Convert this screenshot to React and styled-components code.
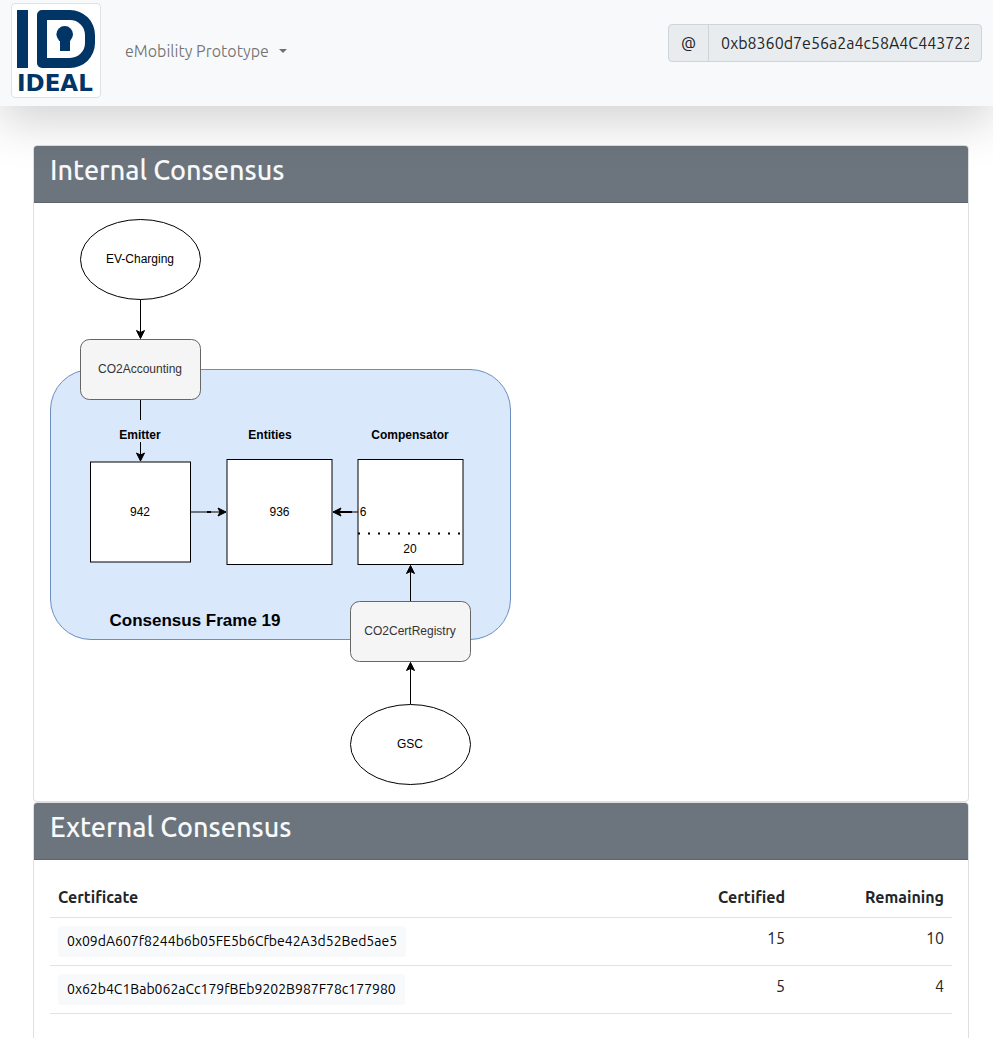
import React from "react";
import styled, { createGlobalStyle } from "styled-components";

const GlobalStyle = createGlobalStyle`
  *, *::before, *::after { box-sizing: border-box; }
  body {
    margin: 0;
    background: #fff;
    color: #212529;
    font-family: Ubuntu, "Noto Sans", sans-serif;
    font-size: 16px;
    line-height: 24px;
  }
`;

const Navbar = styled.header`
  position: relative;
  z-index: 1;
  display: flex;
  align-items: center;
  padding: 3px 11px 8px;
  background: #f8f9fb;
  box-shadow: 0 16px 48px rgba(0, 0, 0, 0.175);
`;

const Brand = styled.a`
  display: flex;
  flex-direction: column;
  flex: none;
  width: 90px;
  height: 95px;
  padding: 6px 5px 0;
  border: 1px solid #dee2e6;
  border-radius: 4px;
  background: #fff;
  color: #003566;
  text-decoration: none;
`;

const Mark = styled.span`
  display: flex;
  gap: 9px;
  height: 58px;
`;

const MarkBar = styled.span`
  width: 11px;
  background: currentColor;
`;

const MarkBowl = styled.span`
  width: 58px;
  border: 10px solid currentColor;
  border-radius: 5px 25px 25px 5px;
`;

const Keyhole = styled.svg`
  display: block;
  width: 38px;
  height: 38px;
`;

const BrandName = styled.span`
  font-family: "DejaVu Sans", sans-serif;
  font-size: 23px;
  font-weight: 700;
  line-height: 30px;
`;

const NavToggle = styled.button`
  display: flex;
  align-items: center;
  gap: 10px;
  margin-left: 16px;
  padding: 8px;
  border: 0;
  background: none;
  color: rgba(0, 0, 0, 0.55);
  font: inherit;
`;

const Caret = styled.span`
  border-top: 4px solid currentColor;
  border-left: 4px solid transparent;
  border-right: 4px solid transparent;
`;

const AddressGroup = styled.div`
  display: flex;
  width: 314px;
  height: 38px;
  margin: 0 0 15px auto;
  border: 1px solid #ced4da;
  border-radius: 4px;
  background: #e9ecef;
`;

const AddressLabel = styled.label`
  padding: 6px 12px;
  border-right: 1px solid #ced4da;
`;

const AddressInput = styled.input`
  flex: 1;
  min-width: 0;
  padding: 6px 12px;
  border: 0;
  background: transparent;
  color: inherit;
  font: inherit;
`;

const Main = styled.main`
  padding: 39px 24px 16px 33px;
`;

const Card = styled.section`
  border: 1px solid #dfdfdf;
  border-radius: 4px;
  background: #fff;
`;

const CardHeader = styled.div`
  padding: 8px 16px 15px;
  border-bottom: 1px solid #5f676e;
  border-radius: 3px 3px 0 0;
  background: #6c757d;
`;

const CardTitle = styled.h3`
  margin: 0;
  color: #f8f9fa;
  font-size: 27px;
  font-weight: 500;
  line-height: 33px;
`;

const CardBody = styled.div`
  padding: 16px;
`;

const Diagram = styled.svg`
  display: block;
  width: 461px;
  max-width: 100%;
  height: auto;
  font-family: "Liberation Sans", Arial, sans-serif;
  font-size: 12px;
  text-anchor: middle;
`;

const Label = styled.text`
  fill: ${(p) => p.$color || "#000"};
  font-weight: ${(p) => (p.$bold ? 700 : 400)};
  font-size: ${(p) => (p.$large ? 17 : 12)}px;
`;

const Table = styled.table`
  width: 100%;
  margin-bottom: 16px;
  border-collapse: separate;
  border-spacing: 0;
`;

const Cell = styled.td`
  width: ${(p) => (p.$numeric ? "159px" : "auto")};
  padding: 8px;
  border-bottom: 1px solid #dee2e6;
  text-align: ${(p) => (p.$numeric ? "right" : "left")};
  vertical-align: top;
`;

const HeadCell = styled(Cell)`
  padding-top: 9px;
  font-weight: 700;
`;

const CertificateButton = styled.button`
  display: block;
  padding: 4px 8px;
  border: 1px solid #f8f9fb;
  border-radius: 3px;
  background: #f8f9fb;
  color: #000;
  font: inherit;
  font-size: 14px;
  line-height: 21px;
`;

const heads = {
  down: "l-4 -8 l4 2 l4 -2 z",
  up: "l-4 8 l4 -2 l4 2 z",
  right: "l-8 -4 l2 4 l-2 4 z",
  left: "l8 -4 l-2 4 l2 4 z",
};

function Arrow({ from, to, dir }) {
  return (
    <g stroke="#000">
      <path d={`M${from} L${to}`} fill="none" />
      <path d={`M${to} ${heads[dir]}`} />
    </g>
  );
}

function ConsensusDiagram() {
  return (
    <Diagram viewBox="0 0 461 566" role="img" aria-label="Internal consensus flow">
      <rect x="0.5" y="150.5" width="460" height="270" rx="40.5" fill="#dae8fc" stroke="#6c8ebf" />
      <ellipse cx="90.5" cy="40.5" rx="60" ry="40" fill="#fff" stroke="#000" />
      <Label x="90" y="44">EV-Charging</Label>
      <Arrow from="90.5 80.5" to="90.5 119.5" dir="down" />
      <rect x="30.5" y="120.5" width="120" height="60" rx="9" fill="#f5f5f5" stroke="#666" />
      <Label x="90" y="154" $color="#333">CO2Accounting</Label>
      <path d="M90.5 181V201" stroke="#000" />
      <Label x="90" y="220" $bold>Emitter</Label>
      <Label x="220" y="220" $bold>Entities</Label>
      <Label x="360" y="220" $bold>Compensator</Label>
      <rect x="40.5" y="243" width="100" height="100" fill="#fff" stroke="#000" />
      <Label x="90" y="297">942</Label>
      <Arrow from="90.5 223" to="90.5 242" dir="down" />
      <rect x="177" y="240.5" width="105" height="105" fill="#fff" stroke="#000" />
      <Label x="229.5" y="297">936</Label>
      <Arrow from="141 293" to="176 293" dir="right" />
      <path d="M157 293H161" stroke="#000" strokeWidth="2" />
      <rect x="308" y="240.5" width="105" height="105" fill="#fff" stroke="#000" />
      <Arrow from="308 293" to="283 293" dir="left" />
      <path d="M288 293H302" stroke="#000" strokeWidth="2" />
      <Label x="313" y="297">6</Label>
      <path d="M308 314.5H413" stroke="#000" strokeWidth="2" strokeDasharray="2 8" />
      <Label x="360" y="334">20</Label>
      <Arrow from="360.5 382" to="360.5 346.5" dir="up" />
      <Label x="145" y="407" $bold $large>Consensus Frame 19</Label>
      <rect x="300.5" y="382.5" width="120" height="60" rx="9" fill="#f5f5f5" stroke="#666" />
      <Label x="360" y="416" $color="#333">CO2CertRegistry</Label>
      <Arrow from="360.5 485" to="360.5 443.5" dir="up" />
      <ellipse cx="360.5" cy="525.5" rx="60" ry="40" fill="#fff" stroke="#000" />
      <Label x="360" y="529">GSC</Label>
    </Diagram>
  );
}

const certificates = [
  { address: "0x09dA607f8244b6b05FE5b6Cfbe42A3d52Bed5ae5", certified: 15, remaining: 10 },
  { address: "0x62b4C1Bab062aCc179fBEb9202B987F78c177980", certified: 5, remaining: 4 },
];

export default function App() {
  return (
    <>
      <GlobalStyle />
      <Navbar>
        <Brand href="#">
          <Mark>
            <MarkBar />
            <MarkBowl>
              <Keyhole viewBox="0 0 38 38" fill="currentColor" aria-hidden="true">
                <circle cx="17.7" cy="14.3" r="8.3" />
                <rect x="13" y="18" width="10" height="13" />
              </Keyhole>
            </MarkBowl>
          </Mark>
          <BrandName>IDEAL</BrandName>
        </Brand>
        <NavToggle type="button" aria-haspopup="true">
          eMobility Prototype
          <Caret />
        </NavToggle>
        <AddressGroup>
          <AddressLabel htmlFor="address">@</AddressLabel>
          <AddressInput id="address" readOnly value="0xb8360d7e56a2a4c58A4C443722" />
        </AddressGroup>
      </Navbar>
      <Main>
        <Card>
          <CardHeader>
            <CardTitle>Internal Consensus</CardTitle>
          </CardHeader>
          <CardBody>
            <ConsensusDiagram />
          </CardBody>
        </Card>
        <Card>
          <CardHeader>
            <CardTitle>External Consensus</CardTitle>
          </CardHeader>
          <CardBody>
            <Table>
              <thead>
                <tr>
                  <HeadCell as="th" scope="col">Certificate</HeadCell>
                  <HeadCell as="th" scope="col" $numeric>Certified</HeadCell>
                  <HeadCell as="th" scope="col" $numeric>Remaining</HeadCell>
                </tr>
              </thead>
              <tbody>
                {certificates.map((c) => (
                  <tr key={c.address}>
                    <Cell>
                      <CertificateButton type="button">{c.address}</CertificateButton>
                    </Cell>
                    <Cell $numeric>{c.certified}</Cell>
                    <Cell $numeric>{c.remaining}</Cell>
                  </tr>
                ))}
              </tbody>
            </Table>
          </CardBody>
        </Card>
      </Main>
    </>
  );
}
